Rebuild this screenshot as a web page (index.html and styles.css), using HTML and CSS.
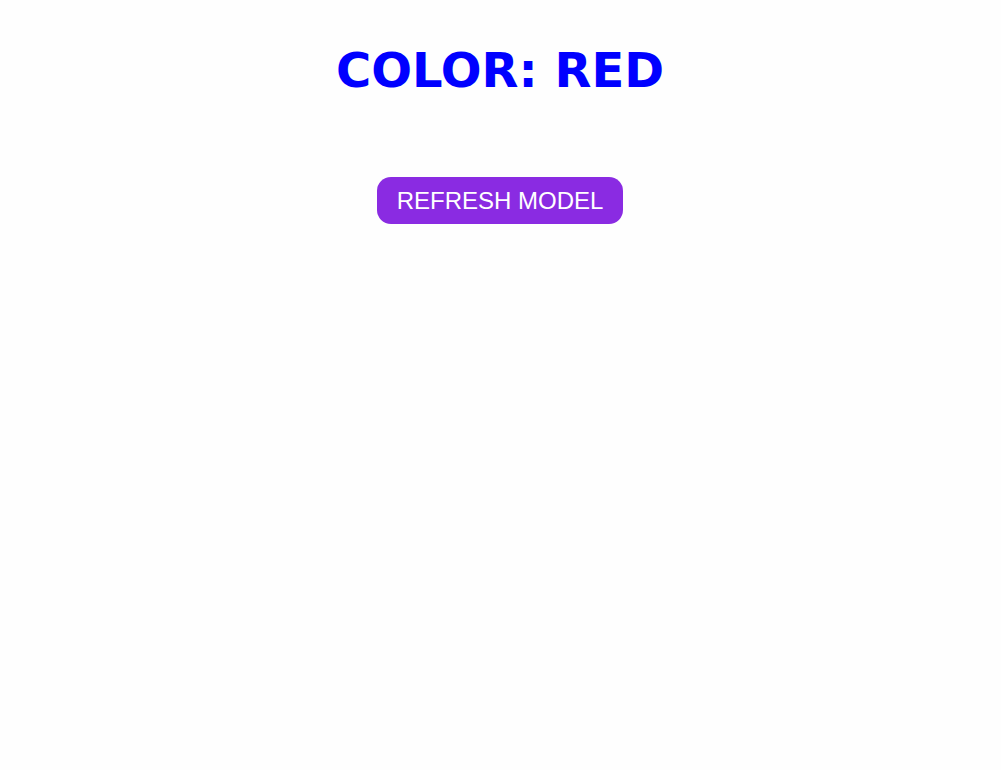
FILE: index.html
```html
<!DOCTYPE html>
<html>
<head>
<meta charset="utf-8">
<link rel="stylesheet" href="styles.css">
</head>
<body>
<div class="page">
  <h1 class="title">COLOR: RED</h1>
  <button class="refresh">REFRESH MODEL</button>
</div>
</body>
</html>
```
FILE: styles.css
```css
html, body {
  margin: 0;
  padding: 0;
  background: #fefefe;
}
.page {
  display: flex;
  flex-direction: column;
  align-items: center;
  padding-top: 40px;
  padding-right: 1px;
}
.title {
  margin: 0;
  font-family: "DejaVu Sans", sans-serif;
  font-weight: bold;
  font-size: 48px;
  line-height: 60px;
  color: #0000ff;
}
.refresh {
  margin-top: 77px;
  width: 246px;
  height: 47px;
  padding: 0;
  border: none;
  border-radius: 14px;
  background: #8a2be2;
  color: #ffffff;
  font-family: "Liberation Sans", Arial, sans-serif;
  font-size: 24px;
}
```
